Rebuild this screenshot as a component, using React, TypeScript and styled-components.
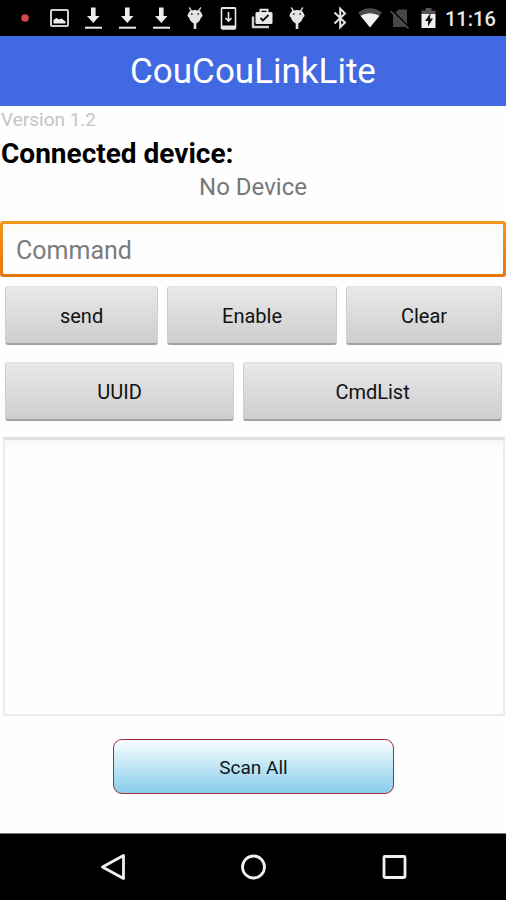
import React from "react";
import styled, { createGlobalStyle } from "styled-components";

const GlobalStyle = createGlobalStyle`
  * { box-sizing: border-box; }
  html, body { margin: 0; background: #fff; }
  body, button, input, textarea { font-family: Roboto, "Liberation Sans", sans-serif; }
`;

const Screen = styled.div`
  display: flex;
  flex-direction: column;
  min-height: 100vh;
  background: #fefefe;
`;

const StatusBar = styled.div`
  display: flex;
  justify-content: space-between;
  align-items: center;
  height: 36px;
  padding: 0 11px 0 8px;
  background: #000;
  color: #e8e8e8;
`;

const IconGroup = styled.div<{ $pitch: number }>`
  display: flex;
  align-items: center;
  svg {
    display: block;
    flex: none;
    width: ${(p) => p.$pitch}px;
    height: 36px;
  }
`;

const Clock = styled.time`
  font-size: 20px;
  font-weight: 500;
  line-height: 36px;
  padding-top: 2px;
  width: 50px;
  text-align: right;
  white-space: nowrap;
`;

const TitleBar = styled.h1`
  margin: 0;
  height: 70px;
  line-height: 72px;
  background: #4169e1;
  color: #fff;
  font-size: 35px;
  font-weight: 400;
  text-align: center;
`;

const Main = styled.main`
  display: flex;
  flex-direction: column;
  flex: 1;
`;

const Version = styled.div`
  padding-left: 1px;
  font-size: 19px;
  line-height: 28px;
  color: #c4c4c4;
`;

const DeviceLabel = styled.h2`
  margin: 0;
  padding-left: 1px;
  font-size: 28px;
  font-weight: 700;
  line-height: 40px;
  color: #000;
`;

const DeviceName = styled.div`
  font-size: 24px;
  line-height: 26px;
  color: #777;
  text-align: center;
`;

const CommandFrame = styled.div`
  margin-top: 21px;
  padding: 3px;
  border-radius: 3px;
  background: linear-gradient(#f0981c, #e8760c);
`;

const CommandInput = styled.input`
  display: block;
  width: 100%;
  height: 50px;
  padding: 2px 13px 0;
  border: 0;
  border-radius: 1px;
  outline: none;
  background: linear-gradient(#f9f9f6, #fefefe 14px);
  font-size: 25px;
  color: #222;
  &::placeholder { color: #7c7c7c; opacity: 1; }
`;

const ButtonRow = styled.div`
  display: flex;
  gap: 9px;
  margin: 9px 4px 8px 5px;
`;

const GreyButton = styled.button<{ $weight: number }>`
  flex: ${(p) => p.$weight} 1 0;
  height: 59px;
  padding: 2px 0 0;
  border: 1px solid #cfcfcf;
  border-top-color: #dfdfdf;
  border-bottom: 2px solid #a2a2a2;
  border-radius: 3px;
  background: linear-gradient(#e9e9e9, #cecece);
  font-size: 20px;
  color: #111;
`;

const Output = styled.textarea`
  display: block;
  flex: 1;
  margin: 8px 1px 0 3px;
  padding: 12px;
  border: 2px solid #ececec;
  border-top: 3px solid #dfdfdf;
  outline: none;
  resize: none;
  background: linear-gradient(#f7f7f7, #fefefe 12px);
  font-size: 20px;
`;

const ScanButton = styled.button`
  height: 55px;
  margin: 23px 112px 39px 113px;
  padding: 2px 0 0;
  border: 1px solid #a02c3c;
  border-radius: 9px;
  background: linear-gradient(#fafdff, #87ceeb);
  font-size: 19px;
  color: #0b1a22;
`;

const NavBar = styled.nav`
  display: grid;
  grid-template-columns: repeat(3, 1fr);
  height: 67px;
  padding: 0 42px;
  background: #000;
  border-top: 1px solid #777;
`;

const NavButton = styled.button`
  display: grid;
  place-items: center;
  padding: 0;
  border: 0;
  background: none;
  svg { display: block; }
`;

const RecordDot = () => (
  <svg viewBox="0 0 34 36"><circle cx="17" cy="18" r="3.8" fill="#d9484a" /></svg>
);

const PictureIcon = () => (
  <svg viewBox="0 0 34 36">
    <rect x="9" y="10" width="17" height="16" rx="1" fill="none" stroke="#d0d0d0" strokeWidth="2" />
    <path d="M11.500 23.500v-3.500l3-2 2.500 1.500 2.500-1 4 3v2z" fill="#eee" />
  </svg>
);

const DownloadIcon = () => (
  <svg viewBox="0 0 34 36">
    <path d="M15 7.500h4.600v8.500h3.900L17.300 23 11 16h4z" fill="#ececec" />
    <path d="M9 27.700h17" stroke="#ececec" strokeWidth="2" />
  </svg>
);

const DroidIcon = () => (
  <svg viewBox="0 0 34 36">
    <path d="M11.500 8l2.500 4M22.500 8l-2.500 4" stroke="#ccc" strokeWidth="1.500" strokeLinecap="round" />
    <path d="M10.500 13Q11 11 13.500 10.500Q17 9.300 20.500 10.500Q23 11 23.500 13L24.700 16l-1.500 1.500Q22 21.500 18.500 23.500h-3Q12 21.500 10.800 17.500L9.300 16z" fill="#e4e4e4" />
    <path d="M17 23v6" stroke="#e4e4e4" strokeWidth="2.600" />
    <circle cx="13.800" cy="14" r="1" fill="#444" />
    <circle cx="20.200" cy="14" r="1" fill="#444" />
  </svg>
);

const SystemUpdateIcon = () => (
  <svg viewBox="0 0 34 36">
    <rect x="9.500" y="8" width="14" height="21" rx="1" fill="none" stroke="#e8e8e8" strokeWidth="1.600" />
    <path d="M9.500 7h14v2H9.500zM9.500 25.500h14V29H9.500z" fill="#e8e8e8" />
    <path d="M16.500 12v9M13.500 18l3 3 3-3" fill="none" stroke="#e8e8e8" strokeWidth="1.600" />
  </svg>
);

const ShopCheckIcon = () => (
  <svg viewBox="0 0 34 36">
    <path d="M7 16.500v10.500H23" fill="none" stroke="#d0d0d0" strokeWidth="2.400" />
    <path d="M14.500 12.500v-2.800h7v2.800" fill="none" stroke="#e8e8e8" strokeWidth="2" />
    <rect x="9.500" y="12" width="17" height="12" rx="1.500" fill="#e8e8e8" />
    <path d="M14.500 18l2.500 2.500 5.500-5.500" fill="none" stroke="#111" strokeWidth="1.800" />
  </svg>
);

const BluetoothIcon = () => (
  <svg viewBox="0 0 30 36">
    <path d="M9.500 12.500l10.500 10-4.800 4.800V8.700l4.800 4.800-10.500 10" fill="none" stroke="#e4e4e4" strokeWidth="2" />
  </svg>
);

const WifiIcon = () => (
  <svg viewBox="0 0 30 36">
    <path d="M15 27.500L3 12.500Q15 4 27 12.500z" fill="#4b4b4b" />
    <path d="M15 27.500L5.500 15.800Q15 10.500 24.500 15.800z" fill="#f0f0f0" />
  </svg>
);

const NoSimIcon = () => (
  <svg viewBox="0 0 30 36">
    <path d="M8 15l5.500-5.500H22V27H8z" fill="#464646" />
    <path d="M6.500 10.500l18 18" stroke="#000" strokeWidth="2.500" />
    <path d="M5.500 11l18 17.500" stroke="#555" strokeWidth="1.600" />
  </svg>
);

const BatteryIcon = () => (
  <svg viewBox="0 0 30 36">
    <path d="M6.500 10.500h4V8h6v2.500h4V15h-14z" fill="#555" />
    <path d="M6.500 14h14v14h-14z" fill="#f0f0f0" />
    <path d="M15.500 13l-5.500 8h3v5.500l5-8h-3z" fill="#111" />
  </svg>
);

export default function App() {
  return (
    <Screen>
      <GlobalStyle />
      <StatusBar>
        <IconGroup $pitch={34}>
          <RecordDot />
          <PictureIcon />
          <DownloadIcon />
          <DownloadIcon />
          <DownloadIcon />
          <DroidIcon />
          <SystemUpdateIcon />
          <ShopCheckIcon />
          <DroidIcon />
        </IconGroup>
        <IconGroup $pitch={30}>
          <BluetoothIcon />
          <WifiIcon />
          <NoSimIcon />
          <BatteryIcon />
          <Clock>11:16</Clock>
        </IconGroup>
      </StatusBar>
      <TitleBar>CouCouLinkLite</TitleBar>
      <Main>
        <Version>Version 1.2</Version>
        <DeviceLabel>Connected device:</DeviceLabel>
        <DeviceName>No Device</DeviceName>
        <CommandFrame>
          <CommandInput type="text" placeholder="Command" aria-label="Command" />
        </CommandFrame>
        <ButtonRow>
          <GreyButton type="button" $weight={153}>send</GreyButton>
          <GreyButton type="button" $weight={170}>Enable</GreyButton>
          <GreyButton type="button" $weight={156}>Clear</GreyButton>
        </ButtonRow>
        <ButtonRow>
          <GreyButton type="button" $weight={229}>UUID</GreyButton>
          <GreyButton type="button" $weight={259}>CmdList</GreyButton>
        </ButtonRow>
        <Output aria-label="Output" />
        <ScanButton type="button">Scan All</ScanButton>
      </Main>
      <NavBar>
        <NavButton type="button" aria-label="Back">
          <svg width="28" height="28" viewBox="0 0 28 28">
            <path d="M25.500 2.500v23L4.500 14z" fill="none" stroke="#f0f0f0" strokeWidth="2.800" strokeLinejoin="round" />
          </svg>
        </NavButton>
        <NavButton type="button" aria-label="Home">
          <svg width="28" height="28" viewBox="0 0 28 28">
            <circle cx="14.500" cy="14" r="11" fill="none" stroke="#f0f0f0" strokeWidth="2.800" />
          </svg>
        </NavButton>
        <NavButton type="button" aria-label="Recent apps">
          <svg width="28" height="28" viewBox="0 0 28 28">
            <rect x="4" y="3.500" width="21" height="21" rx="1" fill="none" stroke="#f0f0f0" strokeWidth="2.800" />
          </svg>
        </NavButton>
      </NavBar>
    </Screen>
  );
}
